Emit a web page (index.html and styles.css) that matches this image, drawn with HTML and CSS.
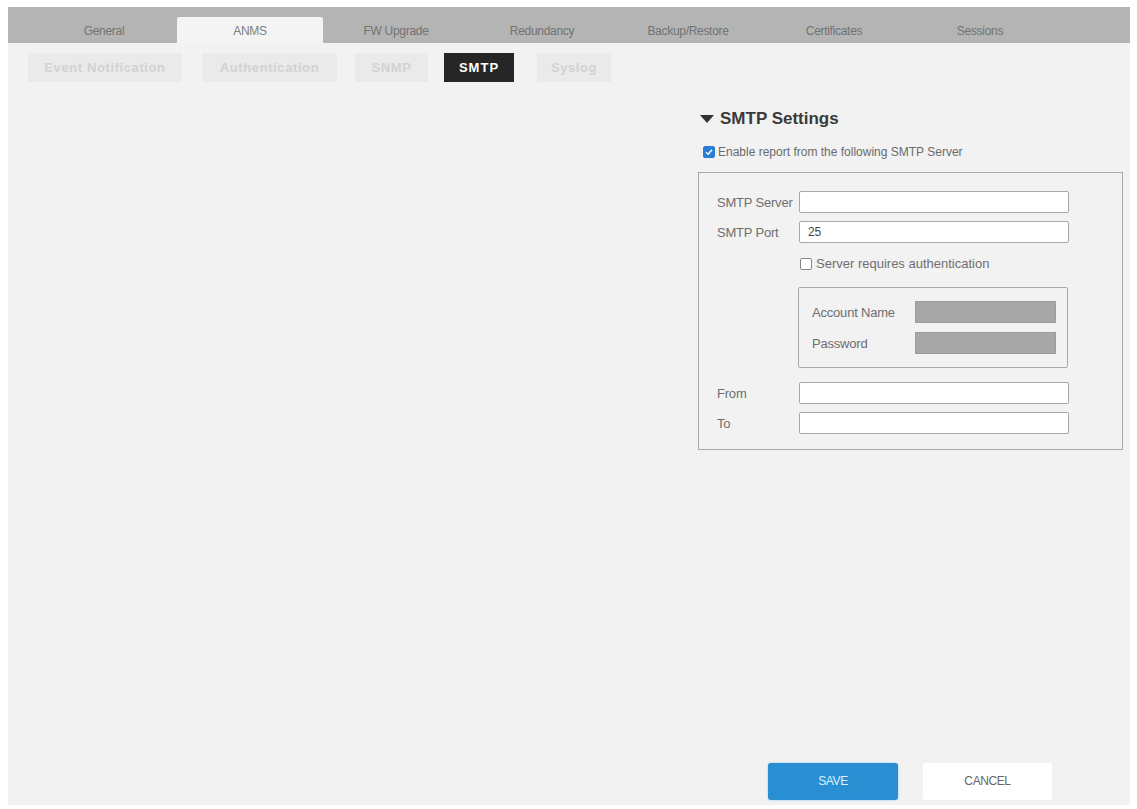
FILE: index.html
```html
<!DOCTYPE html>
<html>
<head>
<meta charset="utf-8">
<link rel="stylesheet" href="styles.css">
</head>
<body>
<div class="frame">
  <div class="tabbar">
    <div class="tab">General</div>
    <div class="tab active">ANMS</div>
    <div class="tab">FW Upgrade</div>
    <div class="tab">Redundancy</div>
    <div class="tab">Backup/Restore</div>
    <div class="tab">Certificates</div>
    <div class="tab">Sessions</div>
  </div>
  <div class="subtabs">
    <div class="subtab st-event">Event Notification</div>
    <div class="subtab st-auth">Authentication</div>
    <div class="subtab st-snmp">SNMP</div>
    <div class="subtab st-smtp selected">SMTP</div>
    <div class="subtab st-syslog">Syslog</div>
  </div>
  <div class="content">
    <div class="panel">
      <h2 class="heading"><span class="caret"></span>SMTP Settings</h2>
      <label class="enable"><span class="cb checked"><svg viewBox="0 0 12 12" width="12" height="12"><path d="M2.6 6.2 L5 8.6 L9.6 3.4" fill="none" stroke="#fff" stroke-width="1.7"/></svg></span>Enable report from the following SMTP Server</label>
      <div class="box">
        <div class="row"><span class="lbl">SMTP Server</span><span class="input"></span></div>
        <div class="row"><span class="lbl">SMTP Port</span><span class="input">25</span></div>
        <div class="auth"><span class="cb"></span>Server requires authentication</div>
        <div class="inner">
          <div class="irow"><span class="ilbl">Account Name</span><span class="ginput"></span></div>
          <div class="irow"><span class="ilbl">Password</span><span class="ginput"></span></div>
        </div>
        <div class="row from"><span class="lbl">From</span><span class="input"></span></div>
        <div class="row"><span class="lbl">To</span><span class="input"></span></div>
      </div>
    </div>
  </div>
  <div class="footer">
    <div class="btn save">SAVE</div>
    <div class="btn cancel">CANCEL</div>
  </div>
</div>
</body>
</html>
```
FILE: styles.css
```css
html, body {
  margin: 0;
  padding: 0;
  background: #ffffff;
}
body {
  font-family: "Liberation Sans", Arial, sans-serif;
  color: #555;
}
.frame {
  margin: 7px 7px 0 8px;
  height: 798px;
  background: #f2f2f2;
  display: flex;
  flex-direction: column;
}
.tabbar {
  height: 36px;
  background: #b4b4b4;
  display: flex;
  padding-left: 23px;
  align-items: flex-end;
  box-sizing: border-box;
}
.tab {
  width: 146px;
  height: 26px;
  box-sizing: border-box;
  text-align: center;
  font-size: 12px;
  color: #727272;
  padding-top: 7px;
  letter-spacing: -0.3px;
}
.tab.active {
  background: #f4f4f4;
  color: #808080;
  border-radius: 2px 2px 0 0;
}
.subtabs {
  display: flex;
  margin-top: 10px;
  height: 29px;
}
.subtab {
  height: 29px;
  box-sizing: border-box;
  background: #eaeaea;
  color: #d2d2d2;
  font-size: 13px;
  font-weight: bold;
  line-height: 29px;
  text-align: center;
  letter-spacing: 0.6px;
}
.st-event { margin-left: 20px; width: 154px; }
.st-auth { margin-left: 20px; width: 135px; }
.st-snmp { margin-left: 18px; width: 73px; }
.st-smtp { margin-left: 16px; width: 70px; }
.st-syslog { margin-left: 23px; width: 74px; }
.subtab.selected {
  background: #262626;
  color: #ffffff;
  letter-spacing: 1px;
}
.content {
  padding-left: 690px;
}
.panel {
  width: 425px;
}
.heading {
  margin: 26px 0 0 2px;
  font-size: 17px;
  font-weight: bold;
  color: #3a3a3a;
  display: flex;
  align-items: center;
  height: 22px;
}
.caret {
  width: 0;
  height: 0;
  border-left: 7px solid transparent;
  border-right: 7px solid transparent;
  border-top: 8px solid #333;
  margin-right: 6px;
}
.enable {
  display: flex;
  align-items: center;
  margin: 15px 0 0 5px;
  font-size: 12px;
  color: #6a6a6a;
  height: 14px;
}
.cb {
  width: 12px;
  height: 12px;
  box-sizing: border-box;
  border: 1px solid #888;
  border-radius: 2px;
  background: #fff;
  margin-right: 3px;
  display: inline-flex;
  align-items: center;
  justify-content: center;
  flex: none;
}
.cb.checked {
  background: #2a7fd4;
  border-color: #2a7fd4;
}
.cb svg { width: 12px; height: 12px; }
.box {
  margin-top: 13px;
  border: 1px solid #a8a8a8;
  padding: 18px 0 15px 18px;
  box-sizing: border-box;
}
.row {
  display: flex;
  align-items: center;
  height: 22px;
  margin-bottom: 8px;
  font-size: 13px;
  letter-spacing: -0.2px;
  color: #6e6e6e;
}
.row:last-child { margin-bottom: 0; }
.lbl {
  width: 82px;
  flex: none;
  white-space: nowrap;
}
.input {
  width: 270px;
  height: 22px;
  box-sizing: border-box;
  background: #fff;
  border: 1px solid #a8a8a8;
  border-radius: 2px;
  padding-left: 8px;
  line-height: 20px;
  color: #444;
  font-size: 12px;
}
.auth {
  display: flex;
  align-items: center;
  margin: 14px 0 0 83px;
  height: 13px;
  font-size: 13px;
  color: #6e6e6e;
}
.auth .cb { margin-right: 4px; }
.inner {
  margin: 17px 0 0 81px;
  width: 270px;
  height: 81px;
  box-sizing: border-box;
  border: 1px solid #a8a8a8;
  border-radius: 2px;
  padding: 13px 0 0 13px;
}
.irow {
  display: flex;
  align-items: center;
  height: 22px;
  margin-bottom: 9px;
  font-size: 13px;
  letter-spacing: -0.2px;
  color: #6e6e6e;
}
.ilbl {
  width: 103px;
  flex: none;
}
.ginput {
  width: 141px;
  height: 22px;
  background: #a7a7a7;
  border: 1px solid #9c9c9c;
  box-sizing: border-box;
}
.row.from {
  margin-top: 14px;
}
.footer {
  margin-top: auto;
  display: flex;
  padding-left: 760px;
  gap: 25px;
  margin-bottom: 5px;
}
.btn {
  width: 130px;
  height: 37px;
  line-height: 37px;
  text-align: center;
  font-size: 12px;
  border-radius: 3px;
  letter-spacing: -0.4px;
}
.save {
  background: #2a8fd2;
  color: #dcefff;
  box-shadow: 0 0 2px #7cc4f0;
}
.cancel {
  width: 129px;
  background: #ffffff;
  color: #666;
}
```
